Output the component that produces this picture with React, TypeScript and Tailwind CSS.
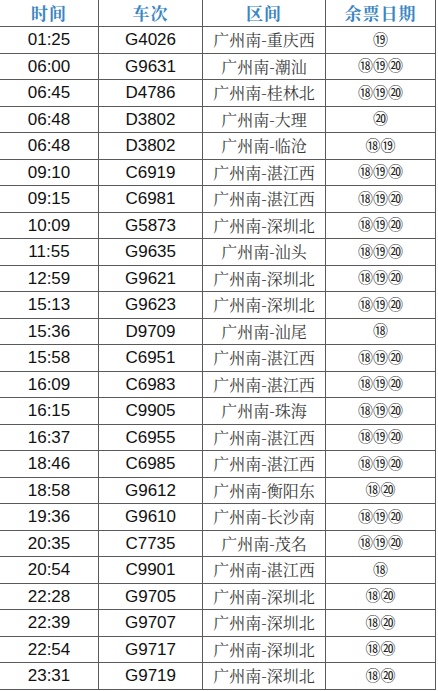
import React from "react";

const rows: [string, string, string, string][] = [
  ["01:25", "G4026", "广州南-重庆西", "⑲"],
  ["06:00", "G9631", "广州南-潮汕", "⑱⑲⑳"],
  ["06:45", "D4786", "广州南-桂林北", "⑱⑲⑳"],
  ["06:48", "D3802", "广州南-大理", "⑳"],
  ["06:48", "D3802", "广州南-临沧", "⑱⑲"],
  ["09:10", "C6919", "广州南-湛江西", "⑱⑲⑳"],
  ["09:15", "C6981", "广州南-湛江西", "⑱⑲⑳"],
  ["10:09", "G5873", "广州南-深圳北", "⑱⑲⑳"],
  ["11:55", "G9635", "广州南-汕头", "⑱⑲⑳"],
  ["12:59", "G9621", "广州南-深圳北", "⑱⑲⑳"],
  ["15:13", "G9623", "广州南-深圳北", "⑱⑲⑳"],
  ["15:36", "D9709", "广州南-汕尾", "⑱"],
  ["15:58", "C6951", "广州南-湛江西", "⑱⑲⑳"],
  ["16:09", "C6983", "广州南-湛江西", "⑱⑲⑳"],
  ["16:15", "C9905", "广州南-珠海", "⑱⑲⑳"],
  ["16:37", "C6955", "广州南-湛江西", "⑱⑲⑳"],
  ["18:46", "C6985", "广州南-湛江西", "⑱⑲⑳"],
  ["18:58", "G9612", "广州南-衡阳东", "⑱⑳"],
  ["19:36", "G9610", "广州南-长沙南", "⑱⑲⑳"],
  ["20:35", "C7735", "广州南-茂名", "⑱⑲⑳"],
  ["20:54", "C9901", "广州南-湛江西", "⑱"],
  ["22:28", "G9705", "广州南-深圳北", "⑱⑳"],
  ["22:39", "G9707", "广州南-深圳北", "⑱⑳"],
  ["22:54", "G9717", "广州南-深圳北", "⑱⑳"],
  ["23:31", "G9719", "广州南-深圳北", "⑱⑳"],
];

const cell = "flex items-center justify-center border-r border-b border-[#5a5a5a]";
const serif = "font-['Noto_Serif_CJK_SC','Noto_Sans_CJK_SC',serif]";
const arial = "font-['Liberation_Sans',Arial,sans-serif]";
const circ = "font-['DejaVu_Sans','Noto_Sans_CJK_SC',sans-serif]";

export default function App() {
  return (
    <div className="w-[438px] h-[691px] bg-white overflow-hidden">
      <div className="grid grid-cols-[99px_104px_123px_110px] w-[436px]">
        {["时间", "车次", "区间", "余票日期"].map((h) => (
          <div
            key={h}
            className={`${cell} ${serif} h-[27px] text-[17px] font-bold text-[#3b86c3] tracking-[1px]`}
          >
            {h}
          </div>
        ))}
        {rows.map((r, i) => {
          const h = i % 2 === 0 ? "h-[27px]" : "h-[26px]";
          return (
            <React.Fragment key={i}>
              <div className={`${cell} ${arial} ${h} text-[17px] text-[#111]`}>{r[0]}</div>
              <div className={`${cell} ${arial} ${h} text-[17px] text-[#111]`}>{r[1]}</div>
              <div className={`${cell} ${serif} ${h} text-[16px] text-[#3a3a3a]`}>{r[2]}</div>
              <div className={`${cell} ${circ} ${h} text-[15px] text-[#222]`}>{r[3]}</div>
            </React.Fragment>
          );
        })}
      </div>
    </div>
  );
}
